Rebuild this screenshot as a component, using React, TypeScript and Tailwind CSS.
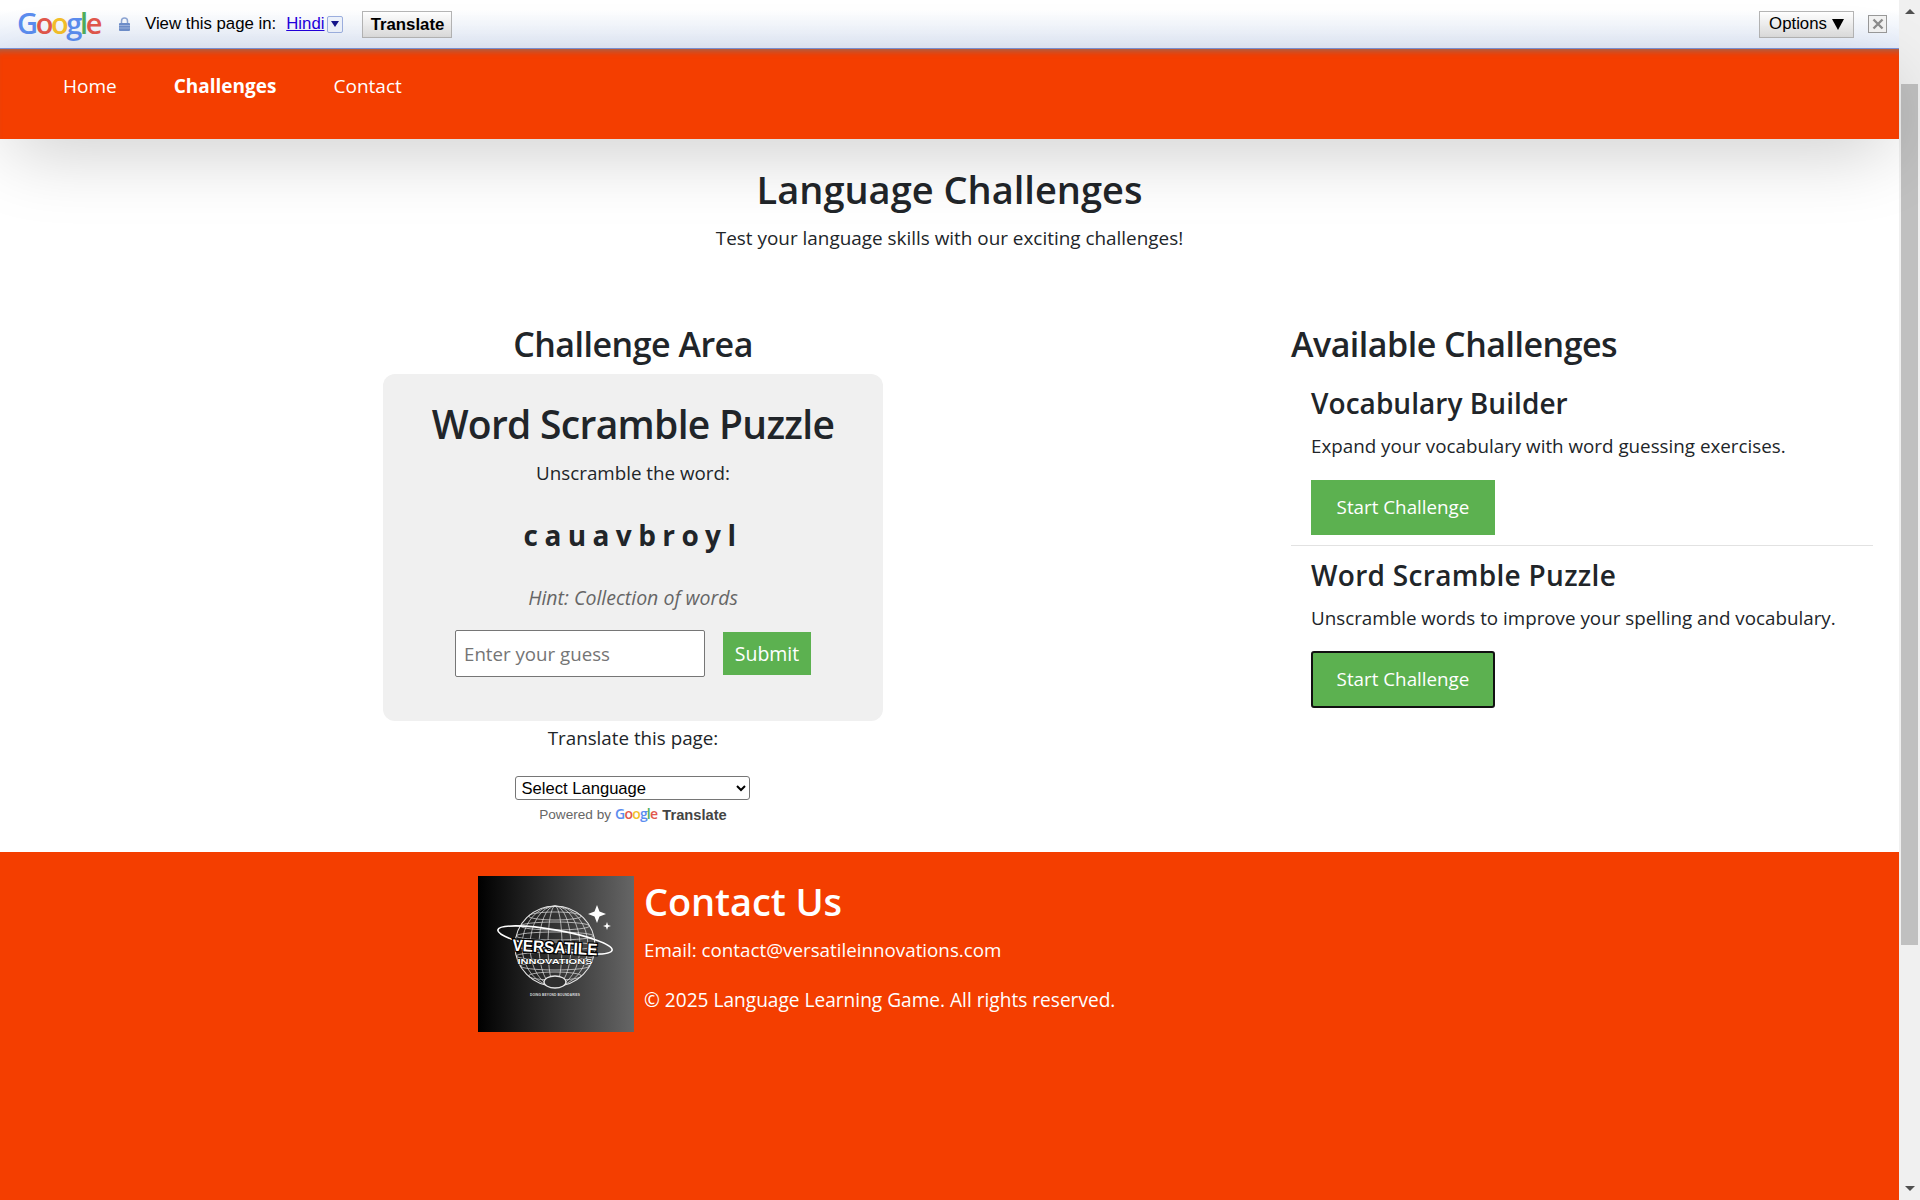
const heading = "font-['Open_Sans',sans-serif] text-[#212529]";

function GoogleWord({ className }: { className: string }) {
  return (
    <span className={className}>
      <span className="text-[#5b8def]">G</span>
      <span className="text-[#e2574c]">o</span>
      <span className="text-[#f4bf2a]">o</span>
      <span className="text-[#5b8def]">g</span>
      <span className="text-[#4fae5c]">l</span>
      <span className="text-[#e2574c]">e</span>
    </span>
  );
}

function TranslateBar() {
  return (
    <div className="flex h-[49px] shrink-0 items-center border-b border-[#7f95d8] bg-gradient-to-b from-white from-20% to-[#e3ebf9] pr-[12px] pl-[17px] font-['Liberation_Sans',sans-serif] text-[16.8px] text-black">
      <GoogleWord className="-mt-[4px] w-[86px] font-['Open_Sans',sans-serif] text-[29px] leading-none font-semibold tracking-[-2.4px]" />
      <svg viewBox="0 0 11 14" className="ml-[16px] h-[14px] w-[11px]">
        <path d="M2.500 6V4a3 3 0 0 1 6 0v2" fill="none" stroke="#8ea6d4" strokeWidth="1.500" />
        <rect y="6" width="11" height="8" rx="1" fill="#6f8fcb" />
        <path d="M0 8.500h11M0 11h11" stroke="#a9bde2" strokeWidth="0.800" />
      </svg>
      <span className="ml-[15px]">View this page in:</span>
      <a className="ml-[10px] text-[#2200dd] underline">Hindi</a>
      <span className="ml-[3px] flex h-[17px] w-[16px] items-center justify-center rounded-[2px] border border-[#9db0e0] bg-[#eef3fc]">
        <span className="h-0 w-0 border-x-[4px] border-t-[6px] border-x-transparent border-t-[#15158c]" />
      </span>
      <button className="ml-[19px] h-[27px] w-[90px] border border-[#b5b5b5] bg-gradient-to-b from-white to-[#dedede] font-bold">Translate</button>
      <button className="ml-auto flex h-[27px] w-[95px] items-center justify-center gap-[5px] border border-[#b5b5b5] bg-gradient-to-b from-white to-[#dedede]">
        Options
        <span className="h-0 w-0 border-x-[6.500px] border-t-[11px] border-x-transparent border-t-black" />
      </button>
      <span className="ml-[14px] flex h-[18px] w-[19px] items-center justify-center border border-[#999] bg-[#f2f2f2]">
        <svg viewBox="0 0 12 12" className="h-[12px] w-[12px]" stroke="#8c8c8c" strokeWidth="2.400">
          <path d="M1.500 1.500l9 9M10.500 1.500l-9 9" />
        </svg>
      </span>
    </div>
  );
}

function Nav() {
  return (
    <nav className="relative z-10 flex h-[90px] shrink-0 items-start gap-[57px] bg-[#f43e00] pt-[24px] pl-[63px] text-[19px] leading-[27px] text-white shadow-[0_20px_75px_-10px_rgba(0,0,0,0.22),inset_0_7px_6px_-5px_rgba(120,120,120,0.7)]">
      <a>Home</a>
      <a className="font-bold">Challenges</a>
      <a>Contact</a>
    </nav>
  );
}

function Challenge({ title, text, focused }: { title: string; text: string; focused?: boolean }) {
  return (
    <div className="px-[20px]">
      <h3 className={`${heading} text-[28px] leading-[34px] font-semibold ${focused ? "tracking-[0.3px]" : "tracking-[0.05px]"}`}>{title}</h3>
      <p className="mt-[12px] text-[18.800px] leading-[28px]">{text}</p>
      <button
        className={`w-[184px] bg-[#5cb150] text-[18.800px] text-white ${
          focused ? "mt-[19px] h-[57px] rounded-[3px] border-2 border-[#111]" : "mt-[20px] h-[55px]"
        }`}
      >
        Start Challenge
      </button>
    </div>
  );
}

function Logo() {
  const lats = [-30, -20, -10, 0, 10, 20, 30];
  const longs = [7, 16, 25, 33];
  return (
    <svg viewBox="0 0 156 156" className="h-[156px] w-[156px] shrink-0">
      <defs>
        <linearGradient id="logoBg">
          <stop offset="0" stopColor="#000" />
          <stop offset="1" stopColor="#666" />
        </linearGradient>
      </defs>
      <rect width="156" height="156" fill="url(#logoBg)" />
      <g fill="none" stroke="#e4e4e4" strokeWidth="0.7">
        <circle cx="77" cy="70" r="40" strokeWidth="1.100" />
        {lats.map((y) => (
          <ellipse key={y} cx="77" cy={70 + y} rx={Math.sqrt(1600 - y * y)} ry="4" />
        ))}
        {longs.map((rx) => (
          <ellipse key={rx} cx="77" cy="70" rx={rx} ry="40" />
        ))}
        <ellipse cx="77" cy="106" rx="11" ry="6" fill="#2e2e2e" strokeWidth="1.300" />
        <ellipse cx="77" cy="64" rx="58" ry="10" strokeWidth="1.600" stroke="#fff" transform="rotate(10 77 64)" />
      </g>
      <path d="M119 29l2.500 6.500 6.500 2.500-6.500 2.500-2.500 6.500-2.500-6.500-6.500-2.500 6.500-2.500zM129 46l1 3 3 1-3 1-1 3-1-3-3-1 3-1z" fill="#fff" />
      <g textAnchor="middle" fontFamily="'Liberation Sans', sans-serif" fill="#fff" fontWeight="700">
        <text x="77" y="77" fontSize="16.500" stroke="#000" strokeWidth="2.500" paintOrder="stroke" transform="rotate(3 77 71)" textLength="85" lengthAdjust="spacingAndGlyphs">VERSATILE</text>
        <text x="77" y="88" fontSize="8" stroke="#111" strokeWidth="0.800" paintOrder="stroke" textLength="75" lengthAdjust="spacingAndGlyphs">INNOVATIONS</text>
        <text x="77" y="120" fontSize="3.200" fill="#ddd" textLength="50" lengthAdjust="spacing">DOING BEYOND BOUNDARIES</text>
      </g>
    </svg>
  );
}

export default function App() {
  return (
    <div className="flex h-[1200px] w-full overflow-hidden bg-white font-['Open_Sans',sans-serif] text-[#212529]">
      <div className="flex min-w-0 flex-1 flex-col">
        <TranslateBar />
        <Nav />

        <main className="h-[713px] shrink-0">
          <div className="pt-[26px] text-center">
            <h1 className={`${heading} text-[38px] leading-[48px] font-semibold`}>Language Challenges</h1>
            <p className="mt-[11px] text-[18.900px] leading-[28px]">Test your language skills with our exciting challenges!</p>
          </div>

          <div className="mt-[71px] flex pl-[383px]">
            <section className="w-[500px] text-center">
              <h2 className={`${heading} text-[34px] leading-[42px] font-semibold tracking-[-0.5px]`}>Challenge Area</h2>
              <div className="mt-[9px] h-[347px] rounded-[12px] bg-[#f0f0f0] pt-[26px]">
                <h3 className={`${heading} text-[39px] leading-[48px] font-semibold tracking-[-0.7px]`}>Word Scramble Puzzle</h3>
                <p className="mt-[11px] text-[18.800px] leading-[28px]">Unscramble the word:</p>
                <p className="mt-[29px] text-[28px] leading-[38px] font-bold tracking-[6.4px]">cauavbroyl</p>
                <p className="mt-[30px] text-[19.500px] leading-[28px] text-[#666] italic">Hint: Collection of words</p>
                <div className="mt-[18px] flex items-center justify-center gap-[18px]">
                  <input
                    placeholder="Enter your guess"
                    className="h-[47px] w-[250px] rounded-[2px] border border-[#767676] bg-white px-[8px] text-[18.700px] placeholder:text-[#757575]"
                  />
                  <button className="h-[43px] w-[88px] bg-[#5cb150] text-[19.500px] text-white">Submit</button>
                </div>
              </div>
              <p className="mt-[3px] text-[18.800px] leading-[28px]">Translate this page:</p>
              <select className="mt-[24px] -ml-[2px] h-[24px] w-[235px] rounded-[3px] border border-[#767676] bg-white pl-[2px] font-['Liberation_Sans',sans-serif] text-[16.600px] text-black">
                <option>Select Language</option>
              </select>
              <div className="mt-[6px] flex items-center justify-center gap-[4px] font-['Liberation_Sans',sans-serif] text-[13.600px] leading-[18px] text-[#666]">
                Powered by
                <GoogleWord className="-mt-[3px] font-['Open_Sans',sans-serif] text-[14px] font-semibold tracking-[-0.8px]" />
                <span className="ml-[1px] text-[14.700px] font-bold text-[#444]">Translate</span>
              </div>
            </section>

            <section className="ml-[408px] w-[582px]">
              <h2 className={`${heading} text-[34px] leading-[42px] font-semibold tracking-[-0.5px]`}>Available Challenges</h2>
              <div className="mt-[21px] border-b border-[#e2e2e2] pb-[10px]">
                <Challenge title="Vocabulary Builder" text="Expand your vocabulary with word guessing exercises." />
              </div>
              <div className="mt-[12px]">
                <Challenge title="Word Scramble Puzzle" text="Unscramble words to improve your spelling and vocabulary." focused />
              </div>
            </section>
          </div>
        </main>

        <footer className="flex flex-1 items-start gap-[10px] bg-[#f43e00] pt-[23px] pl-[478px] text-white">
          <div className="mt-[1px]">
            <Logo />
          </div>
          <div>
            <h2 className="text-[38px] leading-[52px] font-semibold tracking-[-0.1px]">Contact Us</h2>
            <p className="mt-[9px] text-[18.800px] leading-[28px]">Email: contact@versatileinnovations.com</p>
            <p className="mt-[22px] text-[19.100px] leading-[28px]">© 2025 Language Learning Game. All rights reserved.</p>
          </div>
        </footer>
      </div>

      <aside className="flex w-[21px] shrink-0 flex-col items-center bg-[#f0f0f0]">
        <span className="mt-[9px] h-0 w-0 border-x-[5px] border-b-[5px] border-x-transparent border-b-[#505050]" />
        <span className="mt-[70px] h-[861px] w-[17px] bg-[#c0c0c0]" />
        <span className="mt-auto mb-[9px] h-0 w-0 border-x-[5px] border-t-[5px] border-x-transparent border-t-[#505050]" />
      </aside>
    </div>
  );
}
